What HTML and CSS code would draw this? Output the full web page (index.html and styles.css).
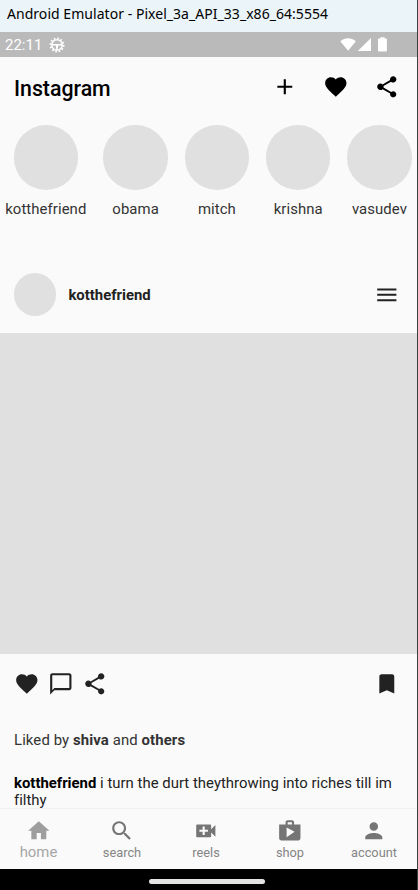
FILE: index.html
```html
<!DOCTYPE html>
<html lang="en">
<head>
<meta charset="utf-8">
<title>Android Emulator</title>
<link rel="stylesheet" href="styles.css">
</head>
<body>
<svg width="0" height="0" class="defs">
  <symbol id="heart" viewBox="0 0 24 24"><path d="M12 21.35l-1.45-1.32C5.4 15.36 2 12.28 2 8.5 2 5.42 4.42 3 7.5 3c1.74 0 3.41.81 4.5 2.09C13.09 3.81 14.76 3 16.5 3 19.58 3 22 5.42 22 8.5c0 3.78-3.4 6.86-8.55 11.54L12 21.35z"/></symbol>
  <symbol id="share" viewBox="0 0 24 24"><path d="M18 16.08c-.76 0-1.44.3-1.96.77L8.91 12.7c.05-.23.09-.46.09-.7s-.04-.47-.09-.7l7.05-4.11c.54.5 1.25.81 2.04.81 1.66 0 3-1.34 3-3s-1.34-3-3-3-3 1.34-3 3c0 .24.04.47.09.7L8.04 9.81C7.5 9.31 6.79 9 6 9c-1.66 0-3 1.34-3 3s1.34 3 3 3c.79 0 1.5-.31 2.04-.81l7.12 4.16c-.05.21-.08.43-.08.65 0 1.61 1.31 2.92 2.92 2.92s2.92-1.31 2.92-2.92-1.31-2.92-2.92-2.92z"/></symbol>
</svg>
<div class="window">
  <header class="titlebar"><span>Android Emulator - Pixel_3a_API_33_x86_64:5554</span></header>
  <div class="status">
    <span class="clock">22:11</span>
    <svg class="gear" viewBox="0 0 16 16"><circle cx="8" cy="8" r="6.6" fill="none" stroke="#fff" stroke-width="1.8" stroke-dasharray="1.7 1.756"/><circle cx="8" cy="8" r="5.2" fill="none" stroke="#fff" stroke-width="1.5"/><path d="M3 7h10v1.4H9.2L8.7 13H7.3L6.8 8.400H3z" fill="#fff"/></svg>
    <svg class="signals" viewBox="0 0 50 18"><path d="M.3 5.200C4.900 1.300 11.300 1.300 15.900 5.200L8.100 14.700zM31 2v13H17.800zM38 3.300q0-.8.8-.8h1.600V1.300h4.200v1.200h1.500q.8 0 .8.800v11.400q0 .8-.8.800h-7.300q-.8 0-.8-.8z" fill="#fff"/></svg>
  </div>
  <div class="appbar">
    <h1>Instagram</h1>
    <div class="actions">
      <svg class="icon" viewBox="0 0 24 24"><path d="M19 13h-6v6h-2v-6H5v-2h6V5h2v6h6v2z"/></svg>
      <svg class="icon"><use href="#heart"/></svg>
      <svg class="icon"><use href="#share"/></svg>
    </div>
  </div>
  <main class="feed">
    <div class="stories">
      <div class="story first"><i></i><span>kotthefriend</span></div>
      <div class="story"><i></i><span>obama</span></div>
      <div class="story"><i></i><span>mitch</span></div>
      <div class="story"><i></i><span>krishna</span></div>
      <div class="story"><i></i><span>vasudev</span></div>
    </div>
    <div class="author">
      <i></i><b>kotthefriend</b>
      <svg class="icon" viewBox="0 0 24 24"><path d="M3 18h18v-1.900H3V18zm0-5h18v-1.900H3V13zm0-7v1.900h18V6H3z"/></svg>
    </div>
    <div class="photo"></div>
    <div class="post-actions">
      <svg class="icon"><use href="#heart"/></svg>
      <svg class="icon" viewBox="0 0 24 24"><path d="M20 2H4c-1.100 0-2 .9-2 2v18l4-4h14c1.100 0 2-.9 2-2V4c0-1.100-.9-2-2-2zm0 14H6l-2 2V4h16v12z"/></svg>
      <svg class="icon"><use href="#share"/></svg>
      <svg class="icon save" viewBox="0 0 24 24"><path d="M17 3H7c-1.100 0-1.990.9-1.990 2L5 21l7-3 7 3V5c0-1.100-.9-2-2-2z"/></svg>
    </div>
    <p class="likes">Liked by <b>shiva</b> and <b>others</b></p>
    <p class="caption"><b>kotthefriend</b> i turn the durt theythrowing into riches till im filthy</p>
  </main>
  <nav class="tabs">
    <div class="tab active"><svg class="icon" viewBox="0 0 24 24"><path d="M10 20v-6h4v6h5v-8h3L12 3 2 12h3v8z"/></svg><span>home</span></div>
    <div class="tab"><svg class="icon" viewBox="0 0 24 24"><path d="M15.500 14h-.79l-.28-.27C15.410 12.590 16 11.110 16 9.500 16 5.910 13.090 3 9.500 3S3 5.910 3 9.500 5.910 16 9.500 16c1.610 0 3.090-.59 4.230-1.570l.27.28v.79l5 4.990L20.490 19l-4.990-5zm-6 0C7.010 14 5 11.990 5 9.500S7.010 5 9.500 5 14 7.010 14 9.500 11.990 14 9.500 14z"/></svg><span>search</span></div>
    <div class="tab"><svg class="icon" viewBox="0 0 24 24"><path d="M17 10.500V7c0-.55-.45-1-1-1H4c-.55 0-1 .45-1 1v10c0 .55.45 1 1 1h12c.55 0 1-.45 1-1v-3.500l4 4v-11l-4 4zM14 13h-3v3H9v-3H6v-2h3V8h2v3h3v2z"/></svg><span>reels</span></div>
    <div class="tab"><svg class="icon" viewBox="0 0 24 24"><path d="M16 6V4c0-1.110-.89-2-2-2h-4c-1.110 0-2 .89-2 2v2H2v13c0 1.110.89 2 2 2h16c1.110 0 2-.89 2-2V6h-6zm-6-2h4v2h-4V4zM9 18V9l7.500 4L9 18z"/></svg><span>shop</span></div>
    <div class="tab"><svg class="icon" viewBox="0 0 24 24"><path d="M12 12c2.210 0 4-1.790 4-4s-1.790-4-4-4-4 1.790-4 4 1.790 4 4 4zm0 2c-2.670 0-8 1.340-8 4v2h16v-2c0-2.660-5.330-4-8-4z"/></svg><span>account</span></div>
  </nav>
  <footer class="gesture"><i></i></footer>
</div>
</body>
</html>
```
FILE: styles.css
```css
* { box-sizing: border-box; }
body {
  margin: 0;
  width: 418px;
  height: 890px;
  overflow: hidden;
  background: #3c4043;
  font-family: Roboto, sans-serif;
  color: #222;
}
.defs { position: absolute; }
.window {
  width: 417px;
  height: 890px;
  display: flex;
  flex-direction: column;
  background: #fafafa;
}
.icon {
  display: block;
  flex: none;
  width: 25.6px;
  height: 25.6px;
  fill: currentColor;
}
.titlebar {
  height: 32px;
  padding-left: 7px;
  background: #ebf4f8;
  color: #000;
  font: 14px/28px "Noto Sans", sans-serif;
  letter-spacing: 0.04px;
  white-space: nowrap;
}
.status {
  height: 25px;
  display: flex;
  align-items: center;
  padding: 0 27px 0 5px;
  background: #bababa;
  color: #fff;
}
.clock { font-size: 15px; letter-spacing: 0; }
.gear { width: 16px; height: 16px; margin-left: 6.500px; }
.signals { width: 50px; height: 18px; margin-left: auto; }
.appbar {
  height: 60px;
  display: flex;
  align-items: center;
  justify-content: space-between;
  padding: 0 17.500px 0 14px;
  color: #000;
}
.appbar h1 {
  margin: 2px 0 0;
  font-size: 21.3px;
  font-weight: 500;
}
.actions { display: flex; gap: 25.6px; }
.feed { height: 691px; overflow: hidden; }
.stories {
  display: flex;
  height: 139px;
  padding: 8.300px 0 0 5.300px;
}
.story {
  width: 64px;
  margin-right: 17.300px;
  flex: none;
  display: flex;
  flex-direction: column;
  align-items: center;
  gap: 10.900px;
  font-size: 14.900px;
  line-height: 18px;
  letter-spacing: 0.08px;
  color: #333;
}
.story.first { width: 81px; }
.story i { width: 64.300px; height: 64.300px; border-radius: 50%; background: #e0e0e0; }
.author {
  height: 77px;
  display: flex;
  align-items: center;
  padding: 0 17.500px 0 13.700px;
  font-size: 14.900px;
}
.author i {
  width: 42.700px;
  height: 42.700px;
  margin-right: 12px;
  border-radius: 50%;
  background: #e0e0e0;
}
.author .icon { margin-left: auto; }
b { font-weight: 700; }
.photo { height: 321px; background: #e0e0e0; }
.post-actions {
  height: 60px;
  display: flex;
  align-items: center;
  gap: 8.600px;
  padding: 0 17.500px 0 13.800px;
}
.save { margin-left: auto; }
.likes, .caption {
  margin: 0;
  padding: 0 14px;
  font-size: 14.900px;
  line-height: 17px;
}
.likes { padding-top: 18px; letter-spacing: 0.11px; color: #333; }
.caption { padding-top: 26px; letter-spacing: 0.02px; }
.caption b { color: #000; letter-spacing: 0; }
.tabs {
  height: 61px;
  display: flex;
  padding-right: 1px;
  border-top: 1px solid #f0f0f0;
  background: #fafafa;
  color: #757575;
}
.tab {
  flex: none;
  width: 84px;
  display: flex;
  flex-direction: column;
  align-items: center;
  padding-top: 8.500px;
  font-size: 12.800px;
  line-height: 18px;
}
.tab span { margin-top: 1.300px; letter-spacing: 0; color: #858585; }
.active { width: 80px; padding-right: 3px; color: #9e9e9e; }
.tab.active { width: 80px; }
.tab.active span { margin-top: 0; font-size: 14.900px; color: #a6a6a6; }
.gesture {
  flex: 1;
  display: flex;
  justify-content: center;
  padding: 10px 3px 0 0;
  background: #000;
}
.gesture i { width: 116px; height: 5px; border-radius: 3px; background: #e4e4e4; }
```
